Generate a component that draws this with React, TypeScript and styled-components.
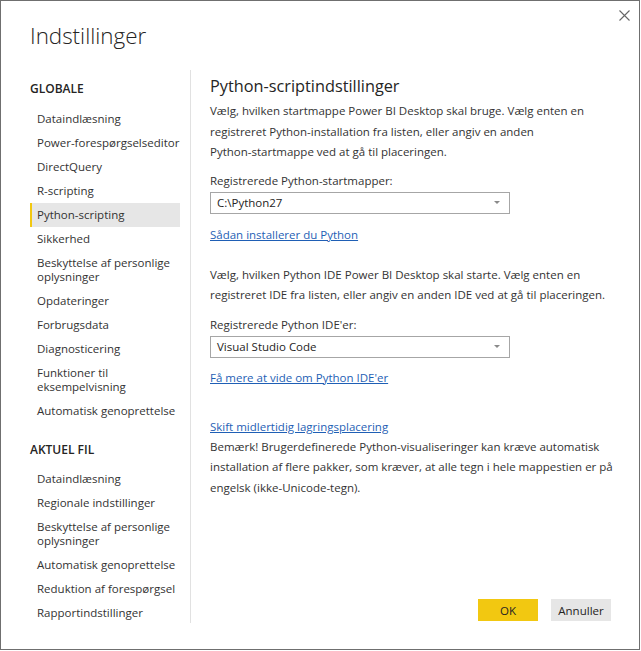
import React from 'react';
import styled, { createGlobalStyle } from 'styled-components';

const Global = createGlobalStyle`
  html, body { margin: 0; padding: 0; background: #ffffff; }
  body { font-family: "Open Sans", "Noto Sans", sans-serif; color: #252423; }
  * { box-sizing: border-box; }
`;

const FONT = '11.5px';

const Dialog = styled.div`
  width: 640px;
  height: 650px;
  border: 1px solid #6f6f6f;
  background: #ffffff;
  display: flex;
  flex-direction: column;
  overflow: hidden;
`;

const Header = styled.header`
  height: 69px;
  flex-shrink: 0;
  padding: 0 9px 0 29px;
  display: flex;
  justify-content: space-between;
  align-items: flex-start;
`;

const Title = styled.h1`
  margin: 19px 0 0 0;
  font-size: 22.4px;
  font-weight: 300;
  line-height: 32px;
  color: #252423;
`;

const Close = styled.button`
  margin-top: 8px;
  width: 12px;
  height: 12px;
  padding: 0;
  border: none;
  background: transparent;
  display: flex;
  align-items: center;
  justify-content: center;
`;

const Body = styled.div`
  flex: 1;
  min-height: 0;
  display: flex;
  padding-bottom: 26px;
`;

const Sidebar = styled.nav`
  flex: 0 0 161px;
  width: 161px;
  margin-left: 29px;
  padding-right: 10px;
  border-right: 1px solid #e1e1e1;
`;

const GroupTitle = styled.div<{ $first?: boolean }>`
  margin: ${p => (p.$first ? '7px 0 6px 0' : '15px 0 5px 0')};
  font-size: 12px;
  font-weight: 600;
  line-height: 24px;
  color: #252423;
`;

const Item = styled.div<{ $selected?: boolean }>`
  padding: 5px 6px 5px 7px;
  font-size: ${FONT};
  line-height: 14px;
  white-space: nowrap;
  color: #333333;
  background: ${p => (p.$selected ? '#e6e6e6' : 'transparent')};
  box-shadow: ${p => (p.$selected ? 'inset 2px 0 0 #f2c811' : 'none')};
`;

const Content = styled.main`
  flex: 1;
  min-width: 0;
  padding: 0 28px 0 19px;
  display: flex;
  flex-direction: column;
`;

const Heading = styled.h2`
  margin: 4px 0 0 0;
  font-size: 16.3px;
  font-weight: 400;
  line-height: 24px;
  color: #252423;
`;

const Para = styled.p<{ $mt: number }>`
  margin: ${p => p.$mt}px 0 0 0;
  font-size: ${FONT};
  line-height: 20.5px;
  color: #333333;
  white-space: nowrap;
`;

const Label = styled.div<{ $mt: number }>`
  margin-top: ${p => p.$mt}px;
  font-size: ${FONT};
  line-height: 20px;
  color: #333333;
`;

const Select = styled.div`
  margin-top: 1px;
  width: 300px;
  height: 22px;
  border: 1px solid #a6a6a6;
  padding: 0 9px 0 6px;
  display: flex;
  align-items: center;
  justify-content: space-between;
  font-size: ${FONT};
  color: #252423;
`;

const Caret = styled.span`
  width: 0;
  height: 0;
  border-left: 3px solid transparent;
  border-right: 3px solid transparent;
  border-top: 3px solid #8a8a8a;
`;

const Link = styled.a<{ $mt: number }>`
  display: block;
  margin-top: ${p => p.$mt}px;
  font-size: ${FONT};
  line-height: 20px;
  color: #1f5fb5;
  text-decoration: underline;
  align-self: flex-start;
`;

const Footer = styled.div`
  margin-top: auto;
  display: flex;
  justify-content: flex-end;
  gap: 13px;
  margin-bottom: 2px;
`;

const Button = styled.button<{ $primary?: boolean }>`
  width: 60px;
  height: 22px;
  border: none;
  padding: 0;
  font-family: inherit;
  font-size: ${FONT};
  color: #252423;
  background: ${p => (p.$primary ? '#f2c811' : '#e6e6e6')};
`;

const globalItems: React.ReactNode[] = [
  'Dataindlæsning',
  'Power-forespørgselseditor',
  'DirectQuery',
  'R-scripting',
  'Python-scripting',
  'Sikkerhed',
  <>Beskyttelse af personlige<br />oplysninger</>,
  'Opdateringer',
  'Forbrugsdata',
  'Diagnosticering',
  <>Funktioner til<br />eksempelvisning</>,
  'Automatisk genoprettelse',
];

const fileItems: React.ReactNode[] = [
  'Dataindlæsning',
  'Regionale indstillinger',
  <>Beskyttelse af personlige<br />oplysninger</>,
  'Automatisk genoprettelse',
  'Reduktion af forespørgsel',
  'Rapportindstillinger',
];

export default function App() {
  return (
    <>
      <Global />
      <Dialog>
        <Header>
          <Title>Indstillinger</Title>
          <Close aria-label="Luk">
            <svg width="11" height="11" viewBox="0 0 11 11">
              <path d="M0.5 0.5 L10.5 10.5 M10.5 0.5 L0.5 10.5" stroke="#666666" strokeWidth="1.1" />
            </svg>
          </Close>
        </Header>
        <Body>
          <Sidebar>
            <GroupTitle $first>GLOBALE</GroupTitle>
            {globalItems.map((t, i) => (
              <Item key={i} $selected={i === 4}>{t}</Item>
            ))}
            <GroupTitle>AKTUEL FIL</GroupTitle>
            {fileItems.map((t, i) => (
              <Item key={i}>{t}</Item>
            ))}
          </Sidebar>
          <Content>
            <Heading>Python-scriptindstillinger</Heading>
            <Para $mt={3}>
              Vælg, hvilken startmappe Power BI Desktop skal bruge. Vælg enten en<br />
              registreret Python-installation fra listen, eller angiv en anden<br />
              Python-startmappe ved at gå til placeringen.
            </Para>
            <Label $mt={8}>Registrerede Python-startmapper:</Label>
            <Select>
              <span>C:\Python27</span>
              <Caret />
            </Select>
            <Link $mt={11} href="#">Sådan installerer du Python</Link>
            <Para $mt={20}>
              Vælg, hvilken Python IDE Power BI Desktop skal starte. Vælg enten en<br />
              registreret IDE fra listen, eller angiv en anden IDE ved at gå til placeringen.
            </Para>
            <Label $mt={9}>Registrerede Python IDE'er:</Label>
            <Select>
              <span>Visual Studio Code</span>
              <Caret />
            </Select>
            <Link $mt={10} href="#">Få mere at vide om Python IDE'er</Link>
            <Link $mt={29} href="#">Skift midlertidig lagringsplacering</Link>
            <Para $mt={0}>
              Bemærk! Brugerdefinerede Python-visualiseringer kan kræve automatisk<br />
              installation af flere pakker, som kræver, at alle tegn i hele mappestien er på<br />
              engelsk (ikke-Unicode-tegn).
            </Para>
            <Footer>
              <Button $primary>OK</Button>
              <Button>Annuller</Button>
            </Footer>
          </Content>
        </Body>
      </Dialog>
    </>
  );
}
